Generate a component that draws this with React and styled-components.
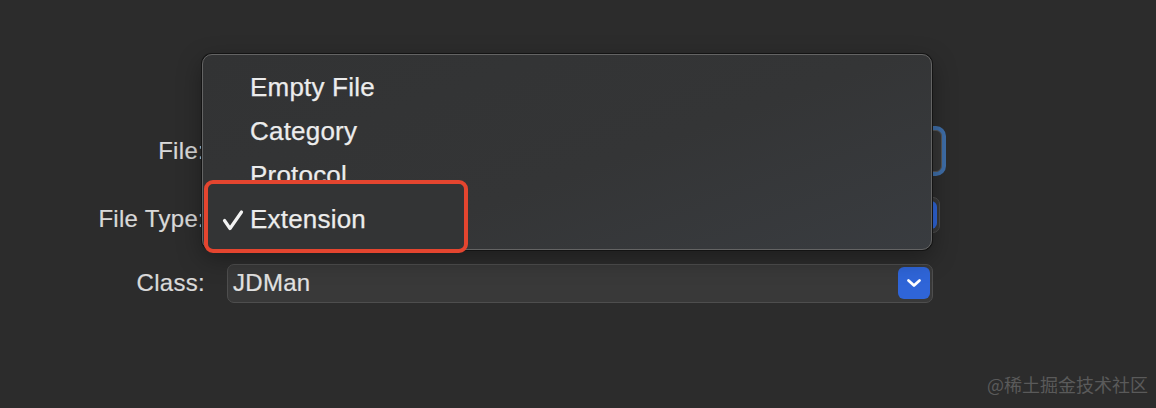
import styled, { createGlobalStyle } from 'styled-components';

const GlobalStyle = createGlobalStyle`
  html, body {
    margin: 0;
    padding: 0;
    background: #2c2c2c;
  }
  * { box-sizing: border-box; }
`;

const Page = styled.div`
  position: relative;
  width: 1156px;
  height: 408px;
  overflow: hidden;
  background: #2c2c2c;
  font-family: "Liberation Sans", Arial, sans-serif;
`;

const Form = styled.div`
  display: flex;
  flex-direction: column;
  padding-top: 118px;
`;

const Row = styled.div`
  display: flex;
  align-items: center;
  height: 66px;
  gap: 22px;
`;

const Label = styled.div`
  width: 205px;
  text-align: right;
  font-size: 24px;
  letter-spacing: 0.3px;
  color: #d9d9d9;
  -webkit-text-stroke: 0.2px #d9d9d9;
  margin-top: ${p => p.$dy || 0}px;
`;

const TextField = styled.div`
  width: ${p => p.$width}px;
  height: 42px;
  border-radius: 6px;
  background: #353535;
  border: 1px solid #555;
  box-shadow: 0 0 0 4px #3f6ea8;
`;

const Popup = styled.div`
  position: relative;
  display: flex;
  align-items: center;
  width: ${p => p.$width}px;
  height: ${p => p.$height}px;
  margin-top: ${p => p.$dy || 0}px;
  padding: 0 2px 0 5px;
  border-radius: 7px;
  background: #393939;
  border: 1px solid #4e4e4e;
  font-size: 24px;
  letter-spacing: 0.3px;
  color: #e2e2e2;
  -webkit-text-stroke: 0.2px #e2e2e2;
`;

const PopupValue = styled.span`
  flex: 1;
`;

const ChevronButton = styled.div`
  display: flex;
  align-items: center;
  justify-content: center;
  width: 32px;
  height: ${p => p.$size}px;
  border-radius: 6px;
  background: #2f65d8;
`;

const Menu = styled.div`
  position: absolute;
  left: 202px;
  top: 54px;
  width: 730px;
  height: 196px;
  padding-top: 10px;
  border-radius: 10px;
  border: 1px solid #646464;
  box-shadow: 0 0 0 1px #141414, 0 8px 24px rgba(0, 0, 0, 0.35);
  background: linear-gradient(160deg, #323334 0%, #343536 55%, #393c40 100%);
`;

const Item = styled.div`
  position: relative;
  z-index: ${p => (p.$front ? 2 : 0)};
  display: flex;
  align-items: center;
  height: 44px;
  padding-left: 47px;
  font-size: 26px;
  letter-spacing: 0.2px;
  color: #ececec;
  -webkit-text-stroke: 0.25px #ececec;
`;

const Check = styled.svg`
  position: absolute;
  left: 19px;
  top: 12px;
`;

const Highlight = styled.div`
  position: absolute;
  z-index: 1;
  left: 1px;
  top: 125px;
  width: 264px;
  height: 73px;
  border: 4px solid #e4452f;
  border-radius: 9px;
  background: #333435;
`;

const Watermark = styled.div`
  position: absolute;
  right: 8px;
  bottom: 11px;
  font-family: "Noto Sans CJK SC", sans-serif;
  font-size: 18px;
  color: #5a5a5a;
`;

const Chevron = () => (
  <svg width="16" height="10" viewBox="0 0 16 10">
    <path d="M2.5 2.5 L8 7.5 L13.5 2.5" fill="none" stroke="#fff" strokeWidth="2.8" strokeLinecap="round" strokeLinejoin="round" />
  </svg>
);

const items = ['Empty File', 'Category', 'Protocol', 'Extension'];

export default function App() {
  return (
    <Page>
      <GlobalStyle />
      <Form>
        <Row>
          <Label>File:</Label>
          <TextField $width={715} />
        </Row>
        <Row>
          <Label $dy={4}>File Type:</Label>
          <Popup $width={713} $height={36} $dy={-4}>
            <PopupValue />
            <ChevronButton $size={28}><Chevron /></ChevronButton>
          </Popup>
        </Row>
        <Row>
          <Label>Class:</Label>
          <Popup $width={706} $height={39}>
            <PopupValue>JDMan</PopupValue>
            <ChevronButton $size={32}><Chevron /></ChevronButton>
          </Popup>
        </Row>
      </Form>

      <Menu>
        <Highlight />
        {items.map(name => (
          <Item key={name} $front={name === 'Extension'}>
            {name === 'Extension' && (
              <Check width="22" height="22" viewBox="0 0 22 22">
                <path d="M2.5 11.5 L8 19.5 L19.5 3" fill="none" stroke="#f2f2f2" strokeWidth="3.2" strokeLinecap="round" strokeLinejoin="round" />
              </Check>
            )}
            {name}
          </Item>
        ))}
      </Menu>

      <Watermark>@稀土掘金技术社区</Watermark>
    </Page>
  );
}
